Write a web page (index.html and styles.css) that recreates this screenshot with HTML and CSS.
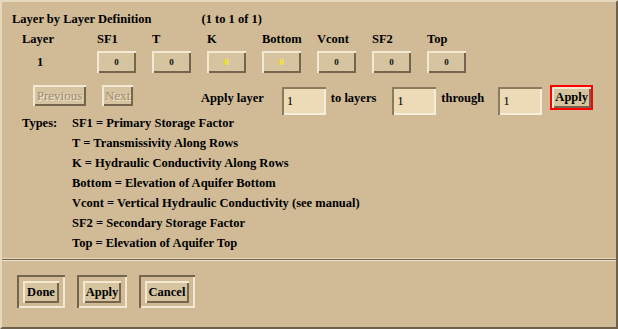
FILE: index.html
```html
<!DOCTYPE html>
<html lang="en">

<head>
    <meta charset="UTF-8">
    <title>Layer by Layer Definition</title>
    <link rel="stylesheet" href="styles.css">
</head>

<body>
    <div class="window">
        <div class="title-row">
            <span class="title">Layer by Layer Definition</span>
            <span class="count">(1 to 1 of 1)</span>
        </div>

        <div class="layer-grid">
            <div class="col-head first">Layer</div>
            <div class="col-head">SF1</div>
            <div class="col-head">T</div>
            <div class="col-head">K</div>
            <div class="col-head">Bottom</div>
            <div class="col-head">Vcont</div>
            <div class="col-head">SF2</div>
            <div class="col-head">Top</div>

            <div class="layer-num">1</div>
            <div><button class="cell-btn">0</button></div>
            <div><button class="cell-btn">0</button></div>
            <div><button class="cell-btn yellow">0</button></div>
            <div><button class="cell-btn yellow">0</button></div>
            <div><button class="cell-btn">0</button></div>
            <div><button class="cell-btn">0</button></div>
            <div><button class="cell-btn">0</button></div>
        </div>

        <div class="action-row">
            <button class="nav-btn prev" disabled>Previous</button>
            <button class="nav-btn next" disabled>Next</button>
            <span class="label apply-label">Apply layer</span>
            <input type="text" class="num-input" value="1">
            <span class="label to-label">to layers</span>
            <input type="text" class="num-input" value="1">
            <span class="label through-label">through</span>
            <input type="text" class="num-input" value="1">
            <button class="apply-btn">Apply</button>
        </div>

        <div class="types">
            <div class="types-label">Types:</div>
            <div>SF1 = Primary Storage Factor</div>
            <div></div>
            <div>T = Transmissivity Along Rows</div>
            <div></div>
            <div>K = Hydraulic Conductivity Along Rows</div>
            <div></div>
            <div>Bottom = Elevation of Aquifer Bottom</div>
            <div></div>
            <div>Vcont = Vertical Hydraulic Conductivity (see manual)</div>
            <div></div>
            <div>SF2 = Secondary Storage Factor</div>
            <div></div>
            <div>Top = Elevation of Aquifer Top</div>
        </div>

        <div class="footer">
            <div class="btn-ring"><button class="btn done">Done</button></div>
            <div class="btn-ring"><button class="btn apply">Apply</button></div>
            <div class="btn-ring"><button class="btn cancel">Cancel</button></div>
        </div>
    </div>
</body>

</html>
```

FILE: styles.css
```css
body {
    margin: 0;
    padding: 0;
    background-color: #d0bb96;
    font-family: "Liberation Serif", "Times New Roman", serif;
    font-size: 12.5px;
    font-weight: bold;
    color: #000;
}

.window {
    width: 618px;
    height: 329px;
    box-sizing: border-box;
    border-top: 2px solid #e6d8bc;
    border-left: 2px solid #e6d8bc;
    border-right: 2px solid #6e604a;
    border-bottom: 2px solid #6e604a;
    background-color: #d0bb96;
    overflow: hidden;
}

button,
input {
    font-family: inherit;
    font-weight: bold;
    font-size: 12.5px;
    color: #000;
    margin: 0;
    padding: 0;
}

.title-row {
    display: flex;
    padding: 10px 0 0 10px;
    line-height: 14px;
    height: 14px;
}

.count {
    margin-left: 50px;
}

.layer-grid {
    display: grid;
    grid-template-columns: 75px repeat(7, 55px);
    grid-template-rows: 14px 22px;
    row-gap: 5px;
    padding: 6px 0 0 20px;
    line-height: 14px;
}

.layer-num {
    padding-left: 15px;
    align-self: center;
}

.cell-btn {
    display: block;
    width: 39px;
    height: 22px;
    background-color: #d6c39f;
    border: none;
    box-shadow: inset 2px 2px 0 #f3e8d2, inset -2px -2px 0 #75654c;
    font-size: 9px;
    color: #111;
    line-height: 22px;
}

.cell-btn.yellow {
    color: #f6f000;
}

.action-row {
    display: flex;
    align-items: flex-start;
    padding: 12px 0 0 31px;
    height: 30px;
}

.nav-btn {
    height: 21px;
    background-color: #d6c39f;
    border: none;
    box-shadow: inset 2px 2px 0 #f3e8d2, inset -2px -2px 0 #75654c;
    color: #9a8a70;
    text-shadow: 1px 1px 0 #f4ead6;
    font-weight: normal;
    font-size: 13px;
    padding: 0 3px;
}

.nav-btn.prev {
    width: 53px;
}

.nav-btn.next {
    width: 31px;
    margin-left: 16px;
}

.label {
    margin-top: 6px;
    line-height: 14px;
}

.apply-label {
    margin-left: 68px;
    margin-right: 18px;
}

.to-label {
    margin-left: 5px;
    margin-right: 16px;
}

.through-label {
    margin-left: 5px;
    margin-right: 14px;
}

.num-input {
    width: 44px;
    height: 28px;
    margin-top: 2px;
    box-sizing: border-box;
    background-color: #ecdbb6;
    border: none;
    box-shadow: inset 2px 2px 0 #8a7a5e, inset -2px -2px 0 #f6eedc;
    padding-left: 5px;
    font-weight: normal;
    font-size: 13px;
    outline: none;
}

.apply-btn {
    width: 43px;
    height: 25px;
    margin-left: 8px;
    border: 2px solid #ff0000;
    background-color: #d6c39f;
    box-shadow: inset 2px 2px 0 #f3e8d2, inset -2px -2px 0 #75654c;
}

.types {
    display: grid;
    grid-template-columns: 50px auto;
    grid-auto-rows: 20px;
    padding: 0 0 0 20px;
    margin-top: -2px;
    line-height: 20px;
    height: 140px;
}

.footer {
    margin-top: 6px;
    border-top: 1px solid #6e604a;
    box-shadow: inset 0 1px 0 #f0e4cc, 0 -1px 0 #e6d8bc;
    display: flex;
    gap: 12px;
    padding: 15px 0 0 15px;
}

.btn-ring {
    padding: 6px 6px 5px 6px;
    box-shadow: inset 2px 2px 0 #75654c, inset -2px -2px 0 #f3e8d2;
}

.btn {
    display: block;
    height: 22px;
    background-color: #d6c39f;
    border: none;
    box-shadow: inset 2px 2px 0 #f3e8d2, inset -2px -2px 0 #75654c;
}

.btn.done {
    width: 36px;
}

.btn.apply {
    width: 38px;
}

.btn.cancel {
    width: 44px;
}

.btn:active,
.cell-btn:active {
    box-shadow: inset 2px 2px 0 #75654c, inset -2px -2px 0 #f3e8d2;
}
```
